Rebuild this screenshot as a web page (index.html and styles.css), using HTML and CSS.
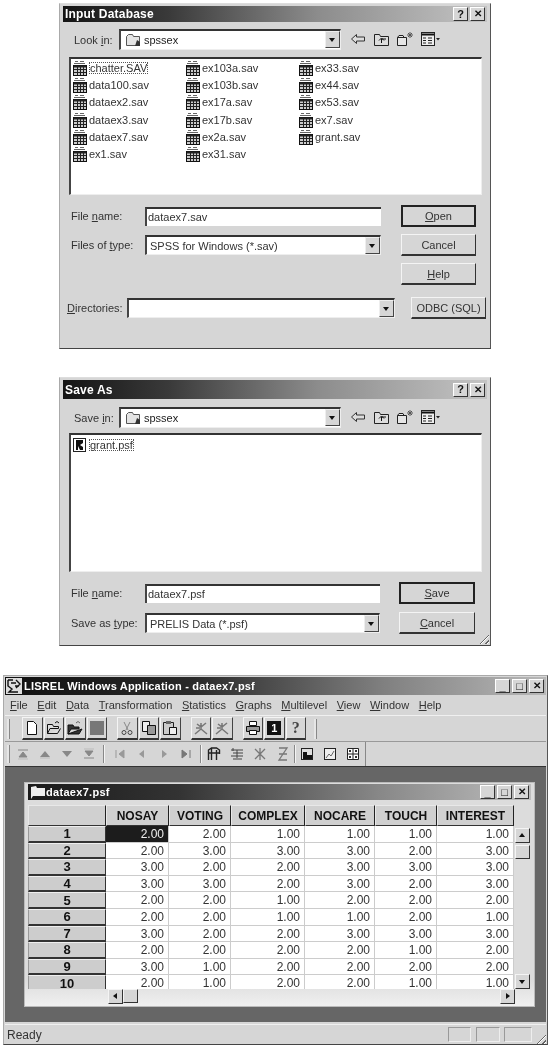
FILE: index.html
```html
<!DOCTYPE html>
<html>

<head>
    <title>LISREL dialogs</title>
    <link rel="stylesheet" href="styles.css">
</head>

<body>
    <svg class="sprites" width="0" height="0">
        <symbol id="db" viewBox="0 0 16 16">
            <path d="M3 1.500h3M8 1.500h4M2 3.500h11" stroke="#666" fill="none"/>
            <rect x="1.500" y="5.500" width="13" height="10" fill="#ccc" stroke="#111"/>
            <path d="M2 6.500h12" stroke="#222" stroke-width="2"/>
            <path d="M2 9.500h12M2 12.500h12M5.500 6v9M8.500 6v9M11.500 6v9" stroke="#222" fill="none"/>
        </symbol>
        <symbol id="psf" viewBox="0 0 16 16">
            <rect x="1.500" y="1.500" width="12" height="13" fill="#fff" stroke="#222"/>
            <path d="M4 3h7v3l-3 2 3 2v3H8L6 9v4H4z" fill="#111"/>
        </symbol>
        <symbol id="folder" viewBox="0 0 16 16">
            <path d="M1.500 4.500l2-2h4l1 2h6v9h-13z" fill="#e4e4e4" stroke="#555"/>
            <path d="M12 8l3 2v4h-5z" fill="#333"/>
        </symbol>
        <symbol id="back" viewBox="0 0 16 16">
            <path d="M1.500 8l5-4.500v2.500h8v4h-8v2.500z" fill="#ddd" stroke="#333"/>
        </symbol>
        <symbol id="up" viewBox="0 0 18 16">
            <path d="M1.500 3.500h5l1 2h8v9h-14z" fill="#ddd" stroke="#222"/>
            <path d="M8.500 12V8M6 9.500l2.500-2.500 2.500 2.500M8.500 8H13" fill="none" stroke="#111"/>
        </symbol>
        <symbol id="newdir" viewBox="0 0 18 16">
            <path d="M1.500 6.500h9v8h-9zM1.500 6.500l1.500-2h4l1 2" fill="#e6e6e6" stroke="#222"/>
            <path d="M14 1v6M11 4h6M12 2l4 4M16 2l-4 4" stroke="#555" fill="none"/>
        </symbol>
        <symbol id="views" viewBox="0 0 20 16">
            <rect x="1.500" y="1.500" width="13" height="13" fill="#eee" stroke="#222"/>
            <path d="M2 3.500h12" stroke="#111" stroke-width="2"/>
            <path d="M3 7h3M8 7h4M3 9.500h3M8 9.500h4M3 12h3M8 12h4" stroke="#222" fill="none"/>
            <path d="M16 7h4l-2 2.500z" fill="#222"/>
        </symbol>
        <symbol id="new" viewBox="0 0 16 16">
            <path d="M3.500 1.500h6l3 3v10h-9z" fill="#fff" stroke="#111"/>
        </symbol>
        <symbol id="open" viewBox="0 0 16 16">
            <path d="M1.500 13.500v-9h5l1 2h5v2H4l-2.500 5h10l3-5" fill="#ddd" stroke="#111"/>
            <path d="M9 3l2-1.500 2 1.500" fill="none" stroke="#111"/>
        </symbol>
        <symbol id="opendark" viewBox="0 0 16 16">
            <path d="M1 14V5h5l1 2h5v2H4l-3 5h11l3-5z" fill="#333" stroke="#111"/>
            <path d="M9 3l2-1.500 2 1.500" fill="none" stroke="#666"/>
        </symbol>
        <symbol id="cut" viewBox="0 0 16 16">
            <path d="M5 2l4 8M11 2L7 10" stroke="#888" fill="none"/>
            <circle cx="5" cy="12.500" r="2" fill="none" stroke="#444"/>
            <circle cx="11" cy="12.500" r="2" fill="none" stroke="#444"/>
        </symbol>
        <symbol id="copy" viewBox="0 0 16 16">
            <path d="M1.500 1.500h7v10h-7z" fill="#eee" stroke="#111"/>
            <path d="M6.500 5.500h8v9h-8z" fill="#999" stroke="#111"/>
        </symbol>
        <symbol id="paste" viewBox="0 0 16 16">
            <path d="M1.500 2.500h10v12h-10z" fill="#ccc" stroke="#222"/>
            <path d="M4 1h5v3H4z" fill="#666"/>
            <path d="M7.500 7.500h7v7h-7z" fill="#eee" stroke="#111"/>
        </symbol>
        <symbol id="fig" viewBox="0 0 16 16">
            <path d="M2 14L8 9M8 9l6 5M8 9V3M4 4l4 3 5-4M3 8h4" fill="none" stroke="#777" stroke-width="1.500"/>
        </symbol>
        <symbol id="print" viewBox="0 0 16 16">
            <path d="M4.500 1.500h7v4h-7z" fill="#fff" stroke="#111"/>
            <path d="M1.500 6.500h13v5h-13z" fill="#999" stroke="#111"/>
            <path d="M4.500 10.500h7v4h-7z" fill="#fff" stroke="#111"/>
        </symbol>
        <symbol id="gotop" viewBox="0 0 12 12">
            <path d="M1 2h10M6 4l4 5H2z" stroke="#888" fill="#888"/>
            <path d="M1 11h10" stroke="#bbb"/>
        </symbol>
        <symbol id="prev" viewBox="0 0 12 12">
            <path d="M6 3l5 6H1z" fill="#888"/>
            <path d="M1 10h10" stroke="#bbb"/>
        </symbol>
        <symbol id="next" viewBox="0 0 12 12">
            <path d="M1 3h10L6 9z" fill="#888"/>
        </symbol>
        <symbol id="gobottom" viewBox="0 0 12 12">
            <path d="M1 10h10M2 3h8L6 8z" stroke="#888" fill="#888"/>
            <path d="M1 1h10" stroke="#bbb"/>
        </symbol>
        <symbol id="first" viewBox="0 0 12 12">
            <path d="M2 2v8M10 2v8L5 6z" stroke="#999" fill="#999"/>
        </symbol>
        <symbol id="left" viewBox="0 0 12 12">
            <path d="M8 2v8L3 6z" fill="#999"/>
        </symbol>
        <symbol id="right" viewBox="0 0 12 12">
            <path d="M4 2v8l5-4z" fill="#999"/>
        </symbol>
        <symbol id="last" viewBox="0 0 12 12">
            <path d="M10 2v8M2 2v8l5-4z" stroke="#777" fill="#777"/>
        </symbol>
        <symbol id="insvar" viewBox="0 0 14 14">
            <path d="M1.500 13V3l3-2h5l3 2v4M4.500 1v12M9.500 3v10M2 6h10" fill="none" stroke="#222" stroke-width="1.400"/>
        </symbol>
        <symbol id="insrow" viewBox="0 0 14 14">
            <path d="M1 3h12M3 6h10M1 9h12M3 1v3M7 3v8M3 12h9" fill="none" stroke="#444"/>
        </symbol>
        <symbol id="delvar" viewBox="0 0 14 14">
            <path d="M2 2l10 10M12 2L2 12M7 1v12" fill="none" stroke="#777" stroke-width="1.300"/>
        </symbol>
        <symbol id="delrow" viewBox="0 0 14 14">
            <path d="M3 1h8L3 13h8M3 7h8" fill="none" stroke="#777" stroke-width="1.300"/>
        </symbol>
        <symbol id="chart1" viewBox="0 0 14 14">
            <rect x="1.500" y="1.500" width="11" height="11" fill="#ddd" stroke="#222"/>
            <path d="M3 12V5h4v3h5v4z" fill="#111"/>
        </symbol>
        <symbol id="chart2" viewBox="0 0 14 14">
            <rect x="1.500" y="1.500" width="11" height="11" fill="#eee" stroke="#222"/>
            <path d="M3 11l3-4 2 2 3-5" fill="none" stroke="#666"/>
        </symbol>
        <symbol id="chart3" viewBox="0 0 14 14">
            <path d="M1.500 1.500h11v11h-11zM7 1v12M1 7h12" fill="#fff" stroke="#222"/>
            <path d="M3 3h2v2H3zM9 3h2v2H9zM3 9h2v2H3zM9 9h2v2H9z" fill="#333"/>
        </symbol>
        <symbol id="logo" viewBox="0 0 16 16">
            <rect width="16" height="16" fill="#ddd"/>
            <path d="M2 2h5M2 2v6l4 3-3 3h9M10 2l4 4-4 4M5 5h5M9 8h4" fill="none" stroke="#111" stroke-width="1.400"/>
        </symbol>
        <symbol id="doc" viewBox="0 0 16 16">
            <path d="M1 3l5-1 1 2h8v8H3l-2 3z" fill="#eee"/>
        </symbol>
    </svg>

    <div class="dialog dialog-open">
        <div class="titlebar">
            <span class="title-text">Input Database</span>
            <span class="caps"><span class="cap">?</span><span class="cap cap-x">&#10005;</span></span>
        </div>
        <div class="lookrow">
            <span class="looklabel">Look <u>i</u>n:</span>
            <div class="combo lookcombo">
                <svg class="ico16"><use href="#folder"/></svg>
                <span class="combotext">spssex</span>
                <span class="arrow"></span>
            </div>
            <div class="navicons">
                <svg class="nav-back"><use href="#back"/></svg>
                <svg class="nav-up"><use href="#up"/></svg>
                <svg class="nav-new"><use href="#newdir"/></svg>
                <svg class="nav-views"><use href="#views"/></svg>
            </div>
        </div>
        <div class="filelist">
            <div class="file"><svg class="ico16"><use href="#db"/></svg><span class="focus">chatter.SAV</span></div>
            <div class="file"><svg class="ico16"><use href="#db"/></svg><span>data100.sav</span></div>
            <div class="file"><svg class="ico16"><use href="#db"/></svg><span>dataex2.sav</span></div>
            <div class="file"><svg class="ico16"><use href="#db"/></svg><span>dataex3.sav</span></div>
            <div class="file"><svg class="ico16"><use href="#db"/></svg><span>dataex7.sav</span></div>
            <div class="file"><svg class="ico16"><use href="#db"/></svg><span>ex1.sav</span></div>
            <div class="file"><svg class="ico16"><use href="#db"/></svg><span>ex103a.sav</span></div>
            <div class="file"><svg class="ico16"><use href="#db"/></svg><span>ex103b.sav</span></div>
            <div class="file"><svg class="ico16"><use href="#db"/></svg><span>ex17a.sav</span></div>
            <div class="file"><svg class="ico16"><use href="#db"/></svg><span>ex17b.sav</span></div>
            <div class="file"><svg class="ico16"><use href="#db"/></svg><span>ex2a.sav</span></div>
            <div class="file"><svg class="ico16"><use href="#db"/></svg><span>ex31.sav</span></div>
            <div class="file"><svg class="ico16"><use href="#db"/></svg><span>ex33.sav</span></div>
            <div class="file"><svg class="ico16"><use href="#db"/></svg><span>ex44.sav</span></div>
            <div class="file"><svg class="ico16"><use href="#db"/></svg><span>ex53.sav</span></div>
            <div class="file"><svg class="ico16"><use href="#db"/></svg><span>ex7.sav</span></div>
            <div class="file"><svg class="ico16"><use href="#db"/></svg><span>grant.sav</span></div>
        </div>
        <div class="form">
            <span class="flabel">File <u>n</u>ame:</span>
            <div class="field">dataex7.sav</div>
            <div class="btn btn-default"><u>O</u>pen</div>
            <span class="flabel">Files of <u>t</u>ype:</span>
            <div class="combo typecombo"><span class="combotext">SPSS for Windows (*.sav)</span><span class="arrow"></span></div>
            <div class="btn">Cancel</div>
            <span></span>
            <span></span>
            <div class="btn"><u>H</u>elp</div>
        </div>
        <div class="dirrow">
            <span class="dirlabel"><u>D</u>irectories:</span>
            <div class="combo dircombo"><span class="combotext"></span><span class="arrow"></span></div>
            <div class="btn btn-odbc">ODBC (SQL)</div>
        </div>
    </div>

    <div class="dialog dialog-save">
        <div class="titlebar titlebar-tall">
            <span class="title-text">Save As</span>
            <span class="caps"><span class="cap">?</span><span class="cap cap-x">&#10005;</span></span>
        </div>
        <div class="lookrow">
            <span class="looklabel">Save <u>i</u>n:</span>
            <div class="combo lookcombo">
                <svg class="ico16"><use href="#folder"/></svg>
                <span class="combotext">spssex</span>
                <span class="arrow"></span>
            </div>
            <div class="navicons">
                <svg class="nav-back"><use href="#back"/></svg>
                <svg class="nav-up"><use href="#up"/></svg>
                <svg class="nav-new"><use href="#newdir"/></svg>
                <svg class="nav-views"><use href="#views"/></svg>
            </div>
        </div>
        <div class="filelist filelist-save">
            <div class="file"><svg class="ico16"><use href="#psf"/></svg><span class="focus">grant.psf</span></div>
        </div>
        <div class="form form-save">
            <span class="flabel">File <u>n</u>ame:</span>
            <div class="field">dataex7.psf</div>
            <div class="btn btn-default"><u>S</u>ave</div>
            <span class="flabel">Save as <u>t</u>ype:</span>
            <div class="combo typecombo"><span class="combotext">PRELIS Data (*.psf)</span><span class="arrow"></span></div>
            <div class="btn"><u>C</u>ancel</div>
        </div>
        <div class="grip"></div>
    </div>

    <div class="appwin">
        <div class="titlebar apptitle">
            <svg class="applogo"><use href="#logo"/></svg>
            <span class="title-text">LISREL Windows Application - dataex7.psf</span>
            <span class="caps"><span class="cap">_</span><span class="cap">&#9633;</span><span class="cap cap-x">&#10005;</span></span>
        </div>
        <div class="menu">
            <span><u>F</u>ile</span>
            <span><u>E</u>dit</span>
            <span><u>D</u>ata</span>
            <span><u>T</u>ransformation</span>
            <span><u>S</u>tatistics</span>
            <span><u>G</u>raphs</span>
            <span><u>M</u>ultilevel</span>
            <span><u>V</u>iew</span>
            <span><u>W</u>indow</span>
            <span><u>H</u>elp</span>
        </div>
        <div class="toolbar">
            <span class="handle"></span>
            <span class="tb"><svg><use href="#new"/></svg></span>
            <span class="tb"><svg><use href="#open"/></svg></span>
            <span class="tb"><svg><use href="#opendark"/></svg></span>
            <span class="tb"><span class="stopbox"></span></span>
            <span class="tb tb-gap"><svg><use href="#cut"/></svg></span>
            <span class="tb"><svg><use href="#copy"/></svg></span>
            <span class="tb"><svg><use href="#paste"/></svg></span>
            <span class="tb tb-gap"><svg><use href="#fig"/></svg></span>
            <span class="tb"><svg><use href="#fig"/></svg></span>
            <span class="tb tb-gap"><svg><use href="#print"/></svg></span>
            <span class="tb"><span class="infobox">1</span></span>
            <span class="tb tb-help">?</span>
            <span class="handle handle-end"></span>
        </div>
        <div class="toolbar2">
            <span class="handle"></span>
            <svg class="t2"><use href="#gotop"/></svg>
            <svg class="t2"><use href="#prev"/></svg>
            <svg class="t2"><use href="#next"/></svg>
            <svg class="t2"><use href="#gobottom"/></svg>
            <span class="sep"></span>
            <svg class="t2"><use href="#first"/></svg>
            <svg class="t2"><use href="#left"/></svg>
            <svg class="t2"><use href="#right"/></svg>
            <svg class="t2"><use href="#last"/></svg>
            <span class="sep sep-b"></span>
            <svg class="t2 t2-big"><use href="#insvar"/></svg>
            <svg class="t2 t2-big"><use href="#insrow"/></svg>
            <svg class="t2 t2-big"><use href="#delvar"/></svg>
            <svg class="t2 t2-big"><use href="#delrow"/></svg>
            <span class="sep sep-c"></span>
            <svg class="t2 t2-big"><use href="#chart1"/></svg>
            <svg class="t2 t2-big"><use href="#chart2"/></svg>
            <svg class="t2 t2-big"><use href="#chart3"/></svg>
        </div>
        <div class="mdi">
            <div class="child">
                <div class="titlebar childtitle">
                    <svg class="ico16"><use href="#doc"/></svg>
                    <span class="title-text">dataex7.psf</span>
                    <span class="caps"><span class="cap">_</span><span class="cap">&#9633;</span><span class="cap cap-x">&#10005;</span></span>
                </div>
                <div class="sheetwrap">
                    <div class="sheet">
                        <div class="hd"></div><div class="hd">NOSAY</div><div class="hd">VOTING</div><div class="hd">COMPLEX</div><div class="hd">NOCARE</div><div class="hd">TOUCH</div><div class="hd">INTEREST</div>
                        <div class="rw">1</div><div class="cell cell-on">2.00</div><div class="cell">2.00</div><div class="cell">1.00</div><div class="cell">1.00</div><div class="cell">1.00</div><div class="cell">1.00</div>
                        <div class="rw">2</div><div class="cell">2.00</div><div class="cell">3.00</div><div class="cell">3.00</div><div class="cell">3.00</div><div class="cell">2.00</div><div class="cell">3.00</div>
                        <div class="rw">3</div><div class="cell">3.00</div><div class="cell">2.00</div><div class="cell">2.00</div><div class="cell">3.00</div><div class="cell">3.00</div><div class="cell">3.00</div>
                        <div class="rw">4</div><div class="cell">3.00</div><div class="cell">3.00</div><div class="cell">2.00</div><div class="cell">3.00</div><div class="cell">2.00</div><div class="cell">3.00</div>
                        <div class="rw">5</div><div class="cell">2.00</div><div class="cell">2.00</div><div class="cell">1.00</div><div class="cell">2.00</div><div class="cell">2.00</div><div class="cell">2.00</div>
                        <div class="rw">6</div><div class="cell">2.00</div><div class="cell">2.00</div><div class="cell">1.00</div><div class="cell">1.00</div><div class="cell">2.00</div><div class="cell">1.00</div>
                        <div class="rw">7</div><div class="cell">3.00</div><div class="cell">2.00</div><div class="cell">2.00</div><div class="cell">3.00</div><div class="cell">3.00</div><div class="cell">3.00</div>
                        <div class="rw">8</div><div class="cell">2.00</div><div class="cell">2.00</div><div class="cell">2.00</div><div class="cell">2.00</div><div class="cell">1.00</div><div class="cell">2.00</div>
                        <div class="rw">9</div><div class="cell">3.00</div><div class="cell">1.00</div><div class="cell">2.00</div><div class="cell">2.00</div><div class="cell">2.00</div><div class="cell">2.00</div>
                        <div class="rw rw-last">10</div><div class="cell">2.00</div><div class="cell">1.00</div><div class="cell">2.00</div><div class="cell">2.00</div><div class="cell">1.00</div><div class="cell">1.00</div>
                    </div>
                    <div class="vscroll">
                        <span class="sbtn sbtn-up"></span>
                        <span class="sthumb"></span>
                        <span class="sfill"></span>
                        <span class="sbtn sbtn-down"></span>
                    </div>
                </div>
                <div class="hscroll">
                    <span class="sbtn sbtn-left"></span>
                    <span class="sthumb sthumb-h"></span>
                    <span class="sfill"></span>
                    <span class="sbtn sbtn-right"></span>
                </div>
            </div>
        </div>
        <div class="status">
            <span class="status-text">Ready</span>
            <span class="pane pane-a"></span>
            <span class="pane pane-b"></span>
            <span class="pane pane-c"></span>
            <span class="grip grip-status"></span>
        </div>
    </div>
</body>

</html>
```

FILE: styles.css
```css
body {
    margin: 0;
    width: 552px;
    height: 1046px;
    overflow: hidden;
    background-color: #fff;
    font-family: "Liberation Sans", Arial, sans-serif;
    font-size: 11px;
    color: #222;
}

u {
    text-underline-offset: 1px;
}

.sprites {
    position: absolute;
}

/* dialogs */

.dialog {
    position: relative;
    box-sizing: border-box;
    width: 432px;
    margin-left: 59px;
    padding: 2px 3px 3px;
    background-color: #d6d6d6;
    border-right: 1px solid #555;
    border-bottom: 1px solid #444;
    border-left: 1px solid #aaa;
    border-top: 1px solid #ddd;
    filter: blur(0.45px);
}

.dialog-open {
    height: 346px;
    margin-top: 3px;
}

.dialog-save {
    height: 269px;
    margin-top: 28px;
}

.dialog-save .lookrow {
    margin-top: 7px;
}

.titlebar {
    display: flex;
    align-items: center;
    height: 16px;
    padding: 0 2px;
    background: linear-gradient(90deg, #141414 0%, #3a3a3a 25%, #8c8c8c 60%, #c4c4c4 100%);
    color: #fff;
}

.titlebar-tall {
    height: 19px;
}

.title-text {
    font-weight: 700;
    font-size: 12px;
    letter-spacing: 0.2px;
}

.caps {
    display: flex;
    gap: 2px;
    margin-left: auto;
}

.cap {
    display: flex;
    align-items: center;
    justify-content: center;
    box-sizing: border-box;
    width: 15px;
    height: 14px;
    background-color: #d6d6d6;
    border: 1px solid;
    border-color: #fff #333 #333 #fff;
    color: #111;
    font-weight: 700;
    font-size: 11px;
    line-height: 1;
}

.cap-x {
    font-size: 10px;
}

.lookrow {
    display: flex;
    align-items: center;
    height: 22px;
    margin-top: 6px;
}

.looklabel {
    width: 45px;
    padding: 1px 0 0 11px;
    color: #333;
}

.combo {
    display: flex;
    align-items: center;
    box-sizing: border-box;
    height: 20px;
    background-color: #fff;
    border-top: 2px solid #333;
    border-left: 2px solid #444;
    border-right: 1px solid #eee;
    border-bottom: 1px solid #eee;
}

.combotext {
    flex: 1;
    padding-left: 3px;
}

.lookcombo {
    width: 222px;
    height: 21px;
}

.lookcombo .ico16 {
    margin-left: 4px;
}

.ico16 {
    flex: none;
    width: 16px;
    height: 16px;
}

.arrow {
    position: relative;
    flex: none;
    box-sizing: border-box;
    width: 15px;
    height: 17px;
    background-color: #d6d6d6;
    border: 1px solid;
    border-color: #eee #444 #444 #eee;
}

.arrow::after {
    content: "";
    position: absolute;
    top: 6px;
    left: 3px;
    border: 3.5px solid transparent;
    border-top: 4px solid #111;
}

.navicons {
    display: flex;
    align-items: center;
    margin-left: 9px;
}

.navicons svg {
    width: 16px;
    height: 16px;
}

.nav-up {
    margin-left: 7px;
}

.navicons .nav-up,
.navicons .nav-new {
    width: 18px;
}

.nav-new {
    margin-left: 5px;
}

.navicons .nav-views {
    width: 20px;
    margin-left: 6px;
}

.filelist {
    display: grid;
    grid-auto-flow: column;
    grid-template-columns: repeat(3, 113px);
    grid-template-rows: repeat(6, 17.300px);
    box-sizing: border-box;
    width: 413px;
    height: 138px;
    margin: 7px 0 0 6px;
    padding-left: 1px;
    background-color: #fff;
    border-top: 2px solid #333;
    border-left: 2px solid #444;
    border-right: 1px solid #eee;
    border-bottom: 1px solid #eee;
}

.filelist-save {
    height: 139px;
    margin-top: 5px;
    padding-top: 1px;
}

.file {
    display: flex;
    align-items: center;
    gap: 1px;
    color: #333;
}

.file .focus {
    padding: 0 1px;
    outline: 1px dotted #555;
    outline-offset: -1px;
}

.form {
    display: grid;
    grid-template-columns: 56px 236px 75px;
    grid-template-rows: repeat(3, 22px);
    column-gap: 20px;
    row-gap: 7px;
    align-items: center;
    margin: 10px 0 0 6px;
}

.form-save {
    grid-template-columns: 57px 235px 76px;
    grid-template-rows: repeat(2, 22px);
    column-gap: 19px;
    row-gap: 8px;
}

.flabel {
    padding-left: 2px;
    color: #333;
    white-space: nowrap;
}

.field {
    box-sizing: border-box;
    height: 19px;
    padding: 1px 0 0 1px;
    background-color: #fff;
    border-top: 2px solid #333;
    border-left: 2px solid #444;
    color: #333;
    line-height: 15px;
}

.typecombo {
    height: 20px;
    color: #333;
}

.btn {
    display: flex;
    align-items: center;
    justify-content: center;
    box-sizing: border-box;
    height: 22px;
    background-color: #d6d6d6;
    border: 1px solid;
    border-color: #f4f4f4 #333 #333 #f4f4f4;
    border-bottom-width: 2px;
    color: #333;
}

.btn-default {
    border: 2px solid #222;
}

.dirrow {
    display: flex;
    align-items: center;
    margin: 12px 0 0 4px;
}

.dirlabel {
    width: 60px;
    color: #333;
}

.dircombo {
    width: 268px;
}

.btn-odbc {
    width: 75px;
    margin-left: 16px;
}

.grip {
    position: absolute;
    right: 1px;
    bottom: 1px;
    width: 12px;
    height: 12px;
    background: repeating-linear-gradient(135deg, transparent 0 2px, #666 2px 3px, #fff 3px 4px);
    clip-path: polygon(100% 0, 100% 100%, 0 100%);
}

/* main window */

.appwin {
    box-sizing: border-box;
    width: 545px;
    height: 370px;
    margin: 29px 0 0 3px;
    padding: 1px;
    background-color: #d6d6d6;
    border: 1px solid #aaa;
    border-right-color: #555;
    border-bottom-color: #444;
    filter: blur(0.45px);
}

.apptitle {
    height: 18px;
    padding-left: 1px;
    background: linear-gradient(90deg, #111 0%, #2a2a2a 35%, #808080 70%, #b8b8b8 100%);
}

.apptitle .title-text {
    font-size: 11px;
}

.applogo {
    width: 16px;
    height: 16px;
    margin-right: 2px;
}

.menu {
    display: flex;
    align-items: center;
    gap: 9.600px;
    box-sizing: border-box;
    height: 21px;
    padding-left: 5px;
    color: #333;
    border-bottom: 1px solid #f0f0f0;
}

.toolbar {
    display: flex;
    align-items: center;
    box-sizing: border-box;
    height: 26px;
    padding-left: 2px;
    border-bottom: 1px solid #999;
}

.handle {
    flex: none;
    box-sizing: border-box;
    width: 3px;
    height: 20px;
    margin-right: 12px;
    background-color: #e6e6e6;
    border-right: 1px solid #888;
}

.handle-end {
    margin-left: 7px;
}

.tb {
    display: flex;
    flex: none;
    align-items: center;
    justify-content: center;
    box-sizing: border-box;
    width: 20.500px;
    height: 23px;
    margin-right: 1px;
    border: 1px solid;
    border-color: #f4f4f4 #444 #333 #f4f4f4;
    border-bottom-width: 2px;
}

.tb svg {
    width: 16px;
    height: 16px;
}

.tb-gap {
    margin-left: 9px;
}

.stopbox {
    width: 14px;
    height: 14px;
    background-color: #777;
}

.infobox {
    width: 14px;
    height: 14px;
    background-color: #111;
    color: #fff;
    font-weight: 700;
    font-size: 11px;
    line-height: 14px;
    text-align: center;
}

.tb-help {
    font: 700 16px "Liberation Serif", serif;
    color: #444;
}

.toolbar2 {
    display: flex;
    align-items: center;
    box-sizing: border-box;
    width: 361px;
    height: 24px;
    padding-left: 2px;
    border-right: 1px solid #888;
}

.toolbar2 .handle {
    height: 18px;
    margin-right: 7px;
}

.t2 {
    flex: none;
    width: 12px;
    height: 12px;
    margin-right: 10px;
}

.t2-big {
    width: 14px;
    height: 14px;
    margin-right: 9px;
}

.sep {
    flex: none;
    width: 1px;
    height: 18px;
    margin: 0 9px 0 -2px;
    background-color: #888;
    border-right: 1px solid #f4f4f4;
}

.sep-b {
    margin-right: 5px;
}

.sep-c {
    margin: 0 4px 0 -5px;
}

.mdi {
    box-sizing: border-box;
    height: 256px;
    padding: 15px 10px 0 19px;
    background-color: #666;
    border-top: 1px solid #333;
}

.child {
    box-sizing: border-box;
    width: 511px;
    height: 225px;
    padding: 1px 3px;
    background: linear-gradient(180deg, #dcdcdc 0%, #dcdcdc 88%, #f0f0f0 100%);
    border: 1px solid #bbb;
}

.childtitle {
    background: linear-gradient(90deg, #1a1a1a 0%, #333 30%, #888 70%, #bdbdbd 100%);
}

.childtitle .title-text {
    font-size: 11px;
    letter-spacing: 0.3px;
}

.sheetwrap {
    display: flex;
    margin-top: 5px;
}

.sheet {
    display: grid;
    flex: none;
    grid-template-columns: 78px 63px 62px 74px 70px 62px 77px;
    grid-template-rows: 21px repeat(9, 16.600px) 13.600px;
    width: 486px;
    height: 184px;
    background-color: #fff;
}

.hd {
    display: flex;
    align-items: center;
    justify-content: center;
    box-sizing: border-box;
    background-color: #d0d0d0;
    border: 1px solid;
    border-color: #e8e8e8 #222 #333 #e8e8e8;
    font-weight: 700;
    font-size: 12px;
    color: #111;
}

.rw {
    display: flex;
    align-items: center;
    justify-content: center;
    box-sizing: border-box;
    background-color: #cdcdcd;
    border: 1px solid;
    border-color: #eee #333 #333 #999;
    border-bottom-width: 2px;
    font-weight: 700;
    font-size: 13px;
    color: #111;
}

.rw-last {
    align-items: flex-start;
    padding-top: 1px;
    line-height: 13px;
}

.rw-last,
.rw-last ~ .cell {
    border-bottom: 0;
}

.cell {
    box-sizing: border-box;
    padding: 1px 4px 0 0;
    border-right: 1px solid #ccc;
    border-bottom: 1px solid #ccc;
    font-size: 12px;
    line-height: 15px;
    text-align: right;
    color: #333;
}

.cell-on {
    background-color: #1c1c1c;
    color: #eee;
}

.vscroll {
    display: flex;
    flex: none;
    flex-direction: column;
    box-sizing: border-box;
    width: 15px;
    height: 184px;
    margin-left: 1px;
    padding-top: 23px;
}

.sbtn {
    position: relative;
    display: block;
    flex: none;
    box-sizing: border-box;
    width: 15px;
    height: 15px;
    background-color: #d6d6d6;
    border: 1px solid;
    border-color: #f4f4f4 #333 #333 #f4f4f4;
}

.sbtn::after {
    content: "";
    position: absolute;
    top: 5px;
    left: 3px;
    border: 3.5px solid transparent;
}

.sbtn-up::after {
    top: 1px;
    border-bottom: 4px solid #111;
}

.sbtn-down::after {
    border-top: 4px solid #111;
}

.sbtn-left::after {
    top: 3px;
    left: 1px;
    border-right: 4px solid #111;
}

.sbtn-right::after {
    top: 3px;
    left: 5px;
    border-left: 4px solid #111;
}

.sthumb {
    display: block;
    flex: none;
    box-sizing: border-box;
    width: 15px;
    height: 14px;
    margin-top: 2px;
    background-color: #d6d6d6;
    border: 1px solid;
    border-color: #f4f4f4 #333 #333 #f4f4f4;
}

.sthumb-h {
    margin-top: 0;
}

.sfill {
    flex: 1;
}

.hscroll {
    display: flex;
    box-sizing: border-box;
    width: 487px;
    height: 15px;
    padding-left: 80px;
}

.status {
    position: relative;
    display: flex;
    align-items: center;
    box-sizing: border-box;
    height: 20px;
    margin-top: 2px;
    padding-left: 2px;
    border-top: 1px solid #f0f0f0;
}

.status-text {
    flex: 1;
    font-size: 12px;
    color: #333;
}

.pane {
    box-sizing: border-box;
    height: 15px;
    border: 1px solid;
    border-color: #999 #eee #eee #999;
}

.pane-a {
    width: 23px;
}

.pane-b {
    width: 24px;
    margin-left: 5px;
}

.pane-c {
    width: 28px;
    margin: 0 14px 0 4px;
}

.grip-status {
    right: 0;
    bottom: 0;
}
```
